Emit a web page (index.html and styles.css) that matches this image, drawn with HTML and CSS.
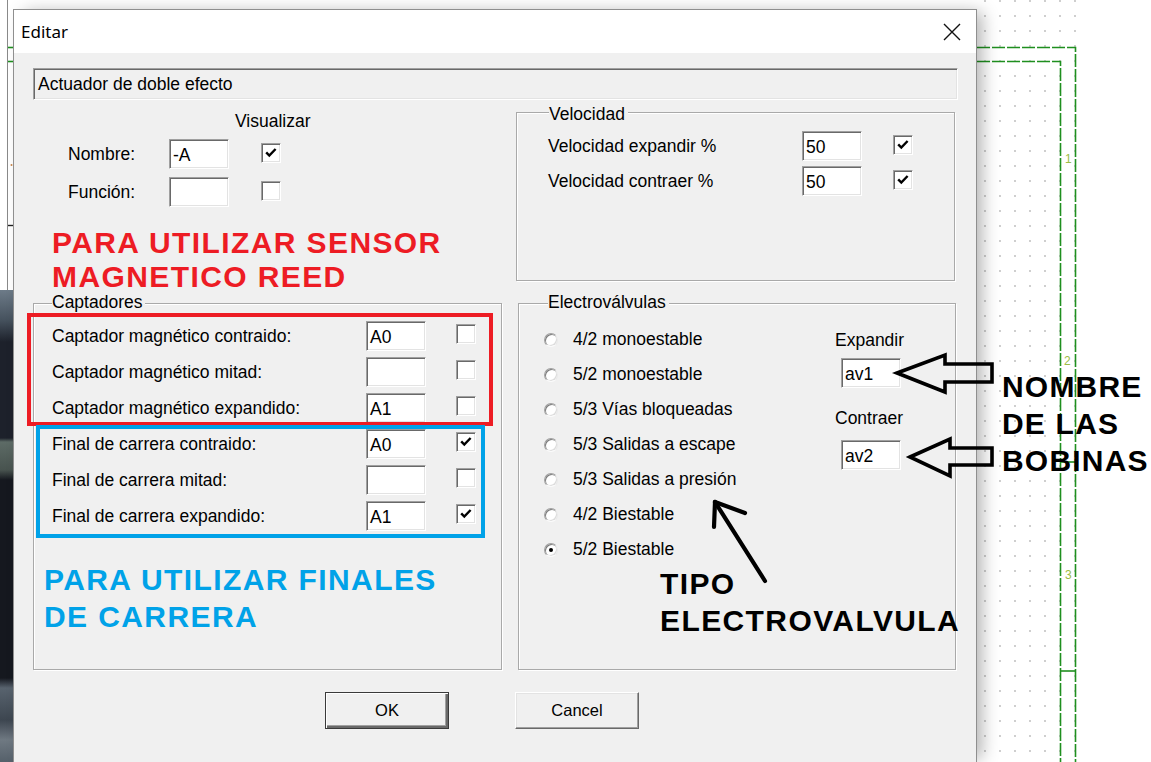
FILE: index.html
```html
<!DOCTYPE html>
<html lang="es">
<head>
<meta charset="utf-8">
<title>Editar</title>
<link rel="stylesheet" href="styles.css">
</head>
<body>
<div class="desk">
  <div class="side">
    <div class="side-top">
      <svg width="13" height="290" viewBox="0 0 13 290">
        <line x1="7.5" y1="0" x2="7.5" y2="290" stroke="#8a8a8a" stroke-width="1"/>
        <line x1="8" y1="47.5" x2="13" y2="47.5" stroke="#1f8f1f" stroke-width="1.6"/>
        <line x1="8" y1="61.5" x2="13" y2="61.5" stroke="#1f8f1f" stroke-width="1.6"/>
        <line x1="8" y1="225.5" x2="13" y2="225.5" stroke="#222" stroke-width="1.4"/>
        <circle cx="11.5" cy="165" r="1" fill="#c9864a"/>
      </svg>
    </div>
    <div class="side-bottom"></div>
  </div>

  <div class="dialog">
    <div class="titlebar">
      <span class="title">Editar</span>
      <svg class="close" width="18" height="18" viewBox="0 0 18 18">
        <path d="M1 1 17 17 M17 1 1 17" stroke="#111" stroke-width="1.4" fill="none"/>
      </svg>
    </div>

    <div class="dlg-body">
      <div class="namebox">Actuador de doble efecto</div>

      <div class="columns">
        <div class="ident">
          <div class="vis-head">Visualizar</div>
          <div class="rows">
            <div class="row">
              <span class="row-label">Nombre:</span>
              <span class="field">-A</span>
              <span class="check on"><svg viewBox="0 0 16 16"><path d="M3.2 7.4 6.3 10.6 12.6 4"/></svg></span>
            </div>
            <div class="row">
              <span class="row-label">Función:</span>
              <span class="field"></span>
              <span class="check"></span>
            </div>
          </div>
          <p class="note note-red">PARA UTILIZAR SENSOR<br>MAGNETICO REED</p>
        </div>

        <div class="group speed">
          <div class="group-title">Velocidad</div>
          <div class="rows">
            <div class="row">
              <span class="row-label">Velocidad expandir %</span>
              <span class="field">50</span>
              <span class="check on"><svg viewBox="0 0 16 16"><path d="M3.2 7.4 6.3 10.6 12.6 4"/></svg></span>
            </div>
            <div class="row">
              <span class="row-label">Velocidad contraer %</span>
              <span class="field">50</span>
              <span class="check on"><svg viewBox="0 0 16 16"><path d="M3.2 7.4 6.3 10.6 12.6 4"/></svg></span>
            </div>
          </div>
        </div>

        <div class="group sensors">
          <div class="group-title">Captadores</div>
          <div class="rows">
            <div class="row">
              <span class="row-label">Captador magnético contraido:</span>
              <span class="field">A0</span>
              <span class="check"></span>
            </div>
            <div class="row">
              <span class="row-label">Captador magnético mitad:</span>
              <span class="field"></span>
              <span class="check"></span>
            </div>
            <div class="row">
              <span class="row-label">Captador magnético expandido:</span>
              <span class="field">A1</span>
              <span class="check"></span>
            </div>
            <div class="row">
              <span class="row-label">Final de carrera contraido:</span>
              <span class="field">A0</span>
              <span class="check on"><svg viewBox="0 0 16 16"><path d="M3.2 7.4 6.3 10.6 12.6 4"/></svg></span>
            </div>
            <div class="row">
              <span class="row-label">Final de carrera mitad:</span>
              <span class="field"></span>
              <span class="check"></span>
            </div>
            <div class="row">
              <span class="row-label">Final de carrera expandido:</span>
              <span class="field">A1</span>
              <span class="check on"><svg viewBox="0 0 16 16"><path d="M3.2 7.4 6.3 10.6 12.6 4"/></svg></span>
            </div>
          </div>
          <p class="note note-blue">PARA UTILIZAR FINALES<br>DE CARRERA</p>
          <div class="frame frame-red"></div>
          <div class="frame frame-blue"></div>
        </div>

        <div class="group valves">
          <div class="group-title">Electroválvulas</div>
          <div class="valves-main">
            <ul class="radio-list">
              <li class="radio-row"><span class="radio"></span>4/2 monoestable</li>
              <li class="radio-row"><span class="radio"></span>5/2 monoestable</li>
              <li class="radio-row"><span class="radio"></span>5/3 Vías bloqueadas</li>
              <li class="radio-row"><span class="radio"></span>5/3 Salidas a escape</li>
              <li class="radio-row"><span class="radio"></span>5/3 Salidas a presión</li>
              <li class="radio-row"><span class="radio"></span>4/2 Biestable</li>
              <li class="radio-row"><span class="radio on"></span>5/2 Biestable</li>
            </ul>
            <div class="coil-names">
              <div class="coil-label">Expandir</div>
              <span class="field">av1</span>
              <div class="coil-label second">Contraer</div>
              <span class="field second">av2</span>
            </div>
          </div>
          <p class="note note-black">TIPO<br>ELECTROVALVULA</p>
        </div>
      </div>

      <div class="buttons">
        <div class="btn btn-default">OK</div>
        <div class="btn">Cancel</div>
      </div>
    </div>
  </div>

  <div class="canvas">
    <svg width="174" height="762" viewBox="0 0 174 762">
      <defs>
        <pattern id="grid-dots" x="7" y="0" width="15" height="15" patternUnits="userSpaceOnUse">
          <circle cx="1" cy="1" r="0.9" fill="#b8b8b8"/>
        </pattern>
      </defs>
      <rect x="0" y="0" width="104" height="762" fill="url(#grid-dots)"/>
      <g stroke="#1f8f1f" stroke-width="1.6" fill="none" stroke-dasharray="13 2">
        <path d="M0 47.5 H98.5 V762"/>
        <path d="M0 61.5 H83.5 V762"/>
      </g>
      <g stroke="#1f8f1f" stroke-width="1.6">
        <line x1="83.5" y1="462" x2="98.5" y2="462"/>
        <line x1="83.5" y1="671" x2="98.5" y2="671"/>
      </g>
      <g font-family="Liberation Sans, Arial, sans-serif" font-size="12" fill="#9cbc44">
        <text x="88" y="163">1</text>
        <text x="87" y="365">2</text>
        <text x="88" y="579">3</text>
      </g>
    </svg>
  </div>
</div>

<svg class="marks" width="1151" height="762" viewBox="0 0 1151 762">
  <g stroke="#000" stroke-width="3.6" fill="none" stroke-linejoin="miter">
    <path d="M897 373 L945 355 L945 364 L992 364 L992 382 L945 382 L945 392 Z"/>
    <path d="M910 457 L950 439 L950 448 L992 448 L992 465 L950 465 L950 476 Z"/>
  </g>
  <g stroke="#000" stroke-width="4.2" fill="none" stroke-linecap="round">
    <path d="M765 581 L715 502"/>
    <path d="M715 502 L714 527"/>
    <path d="M715 502 L745 513"/>
  </g>
</svg>
<p class="callout">NOMBRE<br>DE LAS<br>BOBINAS</p>
</body>
</html>
```

FILE: styles.css
```css
* {
  box-sizing: border-box;
}

html,
body {
  margin: 0;
}

body {
  width: 1151px;
  height: 762px;
  overflow: hidden;
  position: relative;
  background: #fff;
  color: #000;
  font-family: "Liberation Sans", Arial, sans-serif;
  font-size: 17.5px;
}

.desk {
  display: flex;
  height: 762px;
}

/* strip of the application window behind the dialog */
.side {
  flex: none;
  width: 13px;
  display: flex;
  flex-direction: column;
}

.side-top {
  height: 290px;
  background: #fff;
}

.side-top svg {
  display: block;
}

.side-bottom {
  flex: 1;
  background: linear-gradient(
    #6d7b88 0,
    #46525e 30px,
    #1d212b 52px,
    #1d212b 148px,
    #5d6b66 152px,
    #48534f 180px,
    #15181f 190px,
    #15181f 388px,
    #58636e 398px,
    #3d4650 430px,
    #6f7982 450px,
    #55606a 472px
  );
}

/* dialog window */
.dialog {
  flex: none;
  width: 964px;
  margin-top: 9px;
  border: 1px solid #8f8f8f;
  border-bottom: none;
  background: #f0f0f0;
  position: relative;
  z-index: 1;
  box-shadow: 8px 0 16px -3px rgba(0, 0, 0, 0.3);
  display: flex;
  flex-direction: column;
}

.titlebar {
  flex: none;
  height: 43px;
  background: #fff;
  display: flex;
  align-items: center;
  justify-content: space-between;
  padding: 0 15px 0 7px;
}

.title {
  font-family: "Noto Sans", "Open Sans", sans-serif;
  font-size: 17px;
  color: #000;
}

.close {
  display: block;
}

.dlg-body {
  padding: 15px 18px 0 19px;
}

.namebox {
  height: 32px;
  border: 1px solid;
  border-color: #a0a0a0 #fff #fff #a0a0a0;
  box-shadow: inset 1px 1px #696969, inset -1px -1px #e3e3e3;
  padding-left: 4px;
  line-height: 30px;
}

.columns {
  display: grid;
  grid-template-columns: 469px 438px;
  grid-template-rows: 203px 367px;
  column-gap: 16px;
}

/* sunken edit field */
.field {
  flex: none;
  display: block;
  width: 60px;
  height: 30px;
  background: #fff;
  border: 1px solid;
  border-color: #a0a0a0 #fff #fff #a0a0a0;
  box-shadow: inset 1px 1px #696969, inset -1px -1px #e3e3e3;
  padding: 1px 3px 0;
  line-height: 28px;
}

/* sunken check box */
.check {
  flex: none;
  align-self: flex-start;
  width: 20px;
  height: 20px;
  background: #fff;
  border: 1px solid;
  border-color: #a0a0a0 #fff #fff #a0a0a0;
  box-shadow: inset 1px 1px #696969, inset -1px -1px #e3e3e3;
  display: flex;
  align-items: center;
  justify-content: center;
}

.check svg {
  width: 16px;
  height: 16px;
  display: block;
}

.check path {
  fill: none;
  stroke: #000;
  stroke-width: 2.4;
}

.rows {
  display: flex;
  flex-direction: column;
}

.row {
  display: flex;
  align-items: center;
  height: 30px;
}

.row-label {
  flex: none;
  line-height: 20px;
  white-space: nowrap;
}

/* name / function block */
.ident {
  padding-top: 11px;
}

.vis-head {
  margin-left: 202px;
  line-height: 20px;
}

.ident .rows {
  margin-top: 8px;
  gap: 8px;
  padding-left: 35px;
}

.ident .row-label {
  width: 101px;
}

.ident .check {
  margin: 4px 0 0 32px;
}

/* annotations written over the dialog */
.note {
  margin: 0;
  font-weight: bold;
  font-size: 30px;
  letter-spacing: 1.4px;
  white-space: nowrap;
}

.note-red {
  color: #ed1c24;
  line-height: 34px;
  margin: 19px 0 0 19px;
}

.note-blue {
  color: #00a2e8;
  line-height: 37px;
  margin: 30px 0 0 -8px;
}

.note-black {
  color: #000;
  line-height: 37px;
  margin: -2px 0 0 116px;
}

/* etched group boxes */
.group {
  position: relative;
  border: 1px solid #a9a9a9;
  box-shadow: inset 1px 1px #fff, 1px 1px #fff;
}

.group-title {
  width: fit-content;
  background: #f0f0f0;
  line-height: 20px;
  padding-right: 3px;
  margin-top: -12px;
}

.speed {
  margin: 12px 1px 0 -2px;
  height: 169px;
  padding-left: 31px;
}

.speed .group-title {
  margin-top: -9px;
  margin-left: 1px;
}

.speed .rows {
  margin-top: 7px;
  gap: 5px;
}

.speed .row-label {
  width: 254px;
}

.speed .check {
  margin: 4px 0 0 31px;
}

.sensors {
  height: 367px;
  padding-left: 18px;
}

.sensors .rows {
  margin-top: 9px;
  gap: 6px;
}

.sensors .row-label {
  width: 314px;
}

.sensors .check {
  margin: 3px 0 0 30px;
}

.frame {
  position: absolute;
  border: 4px solid;
}

.frame-red {
  border-color: #ed1c24;
  left: -7px;
  top: 9px;
  width: 466px;
  height: 113px;
}

.frame-blue {
  border-color: #00a2e8;
  left: 2px;
  top: 121px;
  width: 449px;
  height: 113px;
}

.valves {
  height: 367px;
  padding-left: 25px;
}

.valves .group-title {
  margin-left: 4px;
}

.valves-main {
  display: flex;
}

.radio-list {
  list-style: none;
  margin: 10px 0 0;
  padding: 0;
  width: 291px;
  flex: none;
}

.radio-row {
  height: 35px;
  display: flex;
  align-items: center;
  gap: 15px;
  white-space: nowrap;
}

.radio {
  flex: none;
  width: 14px;
  height: 14px;
  border-radius: 50%;
  background: #fff;
  border: 1px solid;
  border-color: #a0a0a0 #e8e8e8 #fafafa #a0a0a0;
  box-shadow: inset 1px 1px #7a7a7a, inset -1px -1px #dcdcdc;
  display: flex;
  align-items: center;
  justify-content: center;
}

.radio.on::after {
  content: "";
  width: 4px;
  height: 4px;
  border-radius: 50%;
  background: #000;
}

.coil-names {
  display: flex;
  flex-direction: column;
  align-items: flex-start;
  padding-top: 18px;
}

.coil-label {
  line-height: 20px;
}

.coil-label.second {
  margin-top: 20px;
}

.coil-names .field {
  margin: 8px 0 0 6px;
}

.coil-names .field.second {
  margin-top: 12px;
}

/* push buttons */
.buttons {
  display: flex;
  gap: 66px;
  margin: 22px 0 0 292px;
}

.btn {
  width: 124px;
  height: 37px;
  background: #f0f0f0;
  border: 1px solid;
  border-color: #fff #696969 #696969 #fff;
  box-shadow: inset -1px -1px #a0a0a0, inset 1px 1px #e3e3e3;
  display: flex;
  align-items: center;
  justify-content: center;
  font-size: 16.5px;
}

.btn-default {
  border-color: #3a3a3a;
  box-shadow: inset 1px 1px #fff, inset -2px -2px #696969, inset -3px -3px #a0a0a0;
}

/* drawing canvas beside the dialog */
.canvas {
  flex: 1;
  background: #fff;
}

.canvas svg {
  display: block;
}

.marks {
  position: absolute;
  left: 0;
  top: 0;
  z-index: 5;
  pointer-events: none;
}

.callout {
  position: absolute;
  left: 1002px;
  top: 368px;
  z-index: 5;
  margin: 0;
  font-weight: bold;
  font-size: 30px;
  letter-spacing: 1.2px;
  line-height: 37px;
  white-space: nowrap;
  color: #000;
}
```
